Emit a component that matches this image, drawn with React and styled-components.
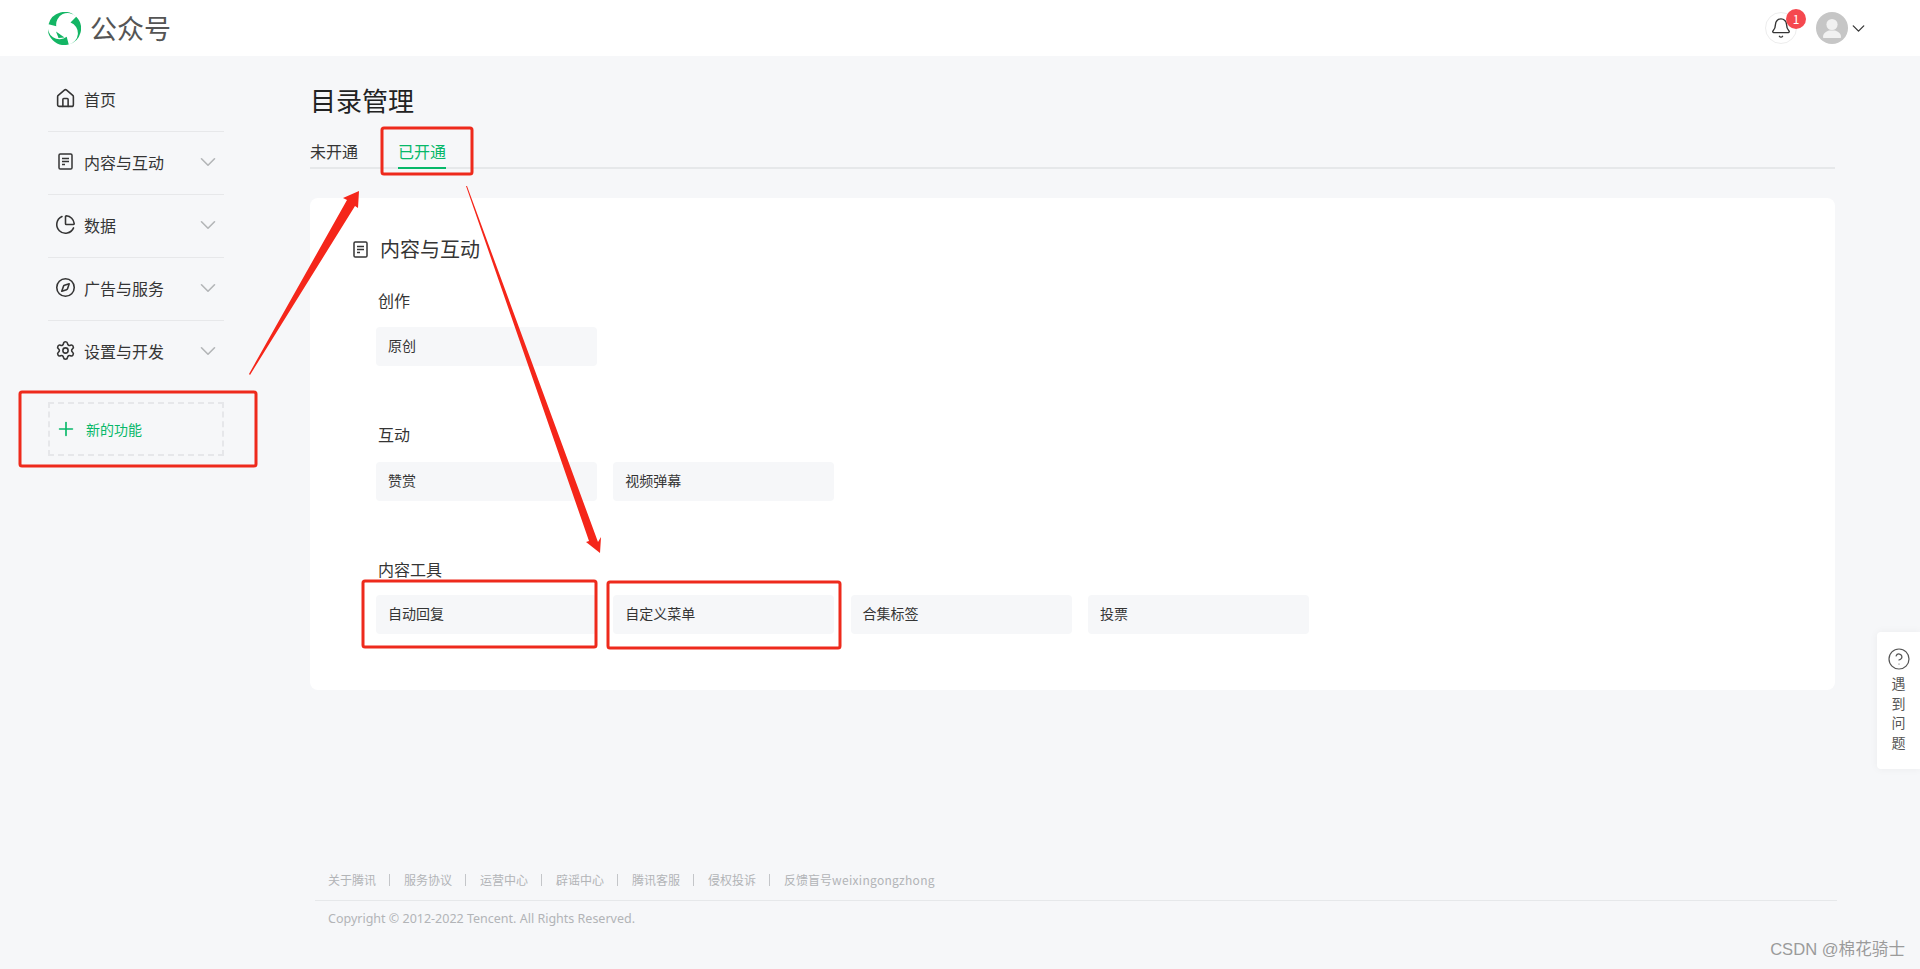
import React from 'react';
import styled, { createGlobalStyle } from 'styled-components';
import { House, ChartPie, Compass, Settings, ChevronDown, Plus, Bell, CircleHelp } from 'lucide-react';

const GlobalStyle = createGlobalStyle`
  html, body {
    margin: 0;
    padding: 0;
    background: #f6f7f9;
    color: #353535;
    font-family: "Noto Sans CJK SC", "Liberation Sans", sans-serif;
  }
  * { box-sizing: border-box; }
`;

const Page = styled.div`
  position: relative;
  width: 1920px;
  height: 969px;
  overflow: hidden;
`;

const Header = styled.header`
  height: 56px;
  background: #fff;
  padding: 0 51px 0 48px;
  display: flex;
  align-items: center;
  justify-content: space-between;
`;

const Brand = styled.div`
  display: flex;
  align-items: center;
  gap: 9px;
  font-size: 27px;
  line-height: 36px;
  color: #555;
`;

const UserArea = styled.div`
  display: flex;
  align-items: center;
`;

const BellButton = styled.div`
  position: relative;
  width: 32px;
  height: 32px;
  border: 1px solid #ededed;
  border-radius: 50%;
  display: flex;
  align-items: center;
  justify-content: center;
  color: #353535;
`;

const Badge = styled.span`
  position: absolute;
  top: -4px;
  right: -10px;
  width: 20px;
  height: 20px;
  border-radius: 50%;
  background: #f5484f;
  color: #fff;
  font-size: 12px;
  line-height: 20px;
  text-align: center;
`;

const Avatar = styled.div`
  width: 32px;
  height: 32px;
  margin-left: 19px;
`;

const Layout = styled.div`
  display: flex;
`;

const Sidebar = styled.nav`
  width: 176px;
  margin-left: 48px;
  padding-top: 13px;
  flex-shrink: 0;
`;

const NavItem = styled.div`
  height: 63px;
  display: flex;
  align-items: center;
  padding: 0 3px 3px 7px;
  font-size: 16px;
  color: #353535;
  border-bottom: 1px solid ${({ $last }) => ($last ? 'transparent' : '#e7e8ea')};

  svg.nav-icon {
    width: 21px;
    height: 21px;
    margin-right: 8px;
    color: #353535;
    flex-shrink: 0;
  }
`;

const NavLabel = styled.span`
  flex: 1;
`;

const NavArrow = styled(ChevronDown)`
  width: 26px;
  height: 26px;
  color: #b4b6b8;
`;

const NewFeature = styled.div`
  height: 54px;
  margin-top: 18px;
  border: 2px dashed #e6e7ea;
  display: flex;
  align-items: center;
  padding-left: 5px;
  gap: 9px;
  font-size: 14px;
  color: #07b869;
`;

const Main = styled.main`
  width: 1525px;
  margin-left: 86px;
  padding-top: 26px;
`;

const Title = styled.h1`
  margin: 0;
  font-size: 26px;
  line-height: 36px;
  font-weight: 400;
  color: #222;
`;

const Tabs = styled.div`
  margin-top: 14px;
  display: flex;
  gap: 40px;
  box-shadow: inset 0 -2px 0 #e6e8ea;
`;

const Tab = styled.div`
  height: 37px;
  padding-top: 7px;
  font-size: 16px;
  line-height: 24px;
  color: ${({ $active }) => ($active ? '#07b869' : '#353535')};
  border-bottom: 2px solid ${({ $active }) => ($active ? '#07b869' : 'transparent')};
`;

const Card = styled.section`
  margin-top: 29px;
  height: 492px;
  background: #fff;
  border-radius: 8px;
  padding: 36px 40px;
`;

const CardTitle = styled.div`
  display: flex;
  align-items: center;
  gap: 9px;
  height: 30px;
  font-size: 20px;
  line-height: 28px;
  color: #353535;
`;

const Group = styled.div`
  margin-top: ${({ $top }) => $top}px;
  padding-left: 26px;
`;

const GroupLabel = styled.div`
  padding-left: 2px;
  height: 24px;
  font-size: 16px;
  line-height: 22px;
  color: #353535;
  margin-bottom: ${({ $gap }) => $gap}px;
`;

const ChipRow = styled.div`
  display: flex;
  gap: 16.3px;
`;

const Chip = styled.div`
  width: 221px;
  height: 39px;
  background: #f6f7f9;
  border-radius: 4px;
  padding-left: 12px;
  font-size: 14px;
  line-height: 37px;
  color: #353535;
`;

const Footer = styled.footer`
  margin-top: 179px;
  font-size: 12px;
  color: #b2b4b7;
`;

const FooterLinks = styled.div`
  display: flex;
  padding-left: 18px;
  height: 22px;
  line-height: 22px;
`;

const FooterLink = styled.span`
  & + &::before {
    content: '';
    display: inline-block;
    width: 1px;
    height: 12px;
    margin: 0 14px 0 13px;
    background: #c4c6c9;
    vertical-align: -1px;
  }
`;

const LatinPart = styled.span`
  letter-spacing: 0.3px;
`;

const Copyright = styled.div`
  margin: 9px -2px 0 5px;
  padding: 8px 0 0 13px;
  border-top: 1px solid #e6e8ea;
  line-height: 20px;
  font-size: 12.5px;
  font-family: "Noto Sans", "Noto Sans CJK SC", sans-serif;
`;

const HelpTab = styled.div`
  position: absolute;
  right: 0;
  top: 632px;
  width: 43px;
  height: 137px;
  background: #fff;
  border-radius: 4px 0 0 4px;
  box-shadow: 0 0 8px rgba(0, 0, 0, 0.05);
  display: flex;
  flex-direction: column;
  align-items: center;
  padding-top: 15px;
  font-size: 14px;
  line-height: 19.5px;
  color: #555;
  gap: 3px;
`;

const HelpText = styled.div`
  width: 14px;
  text-align: center;
`;

const Watermark = styled.div`
  position: absolute;
  right: 15px;
  bottom: 7px;
  font-size: 16.6px;
  line-height: 24px;
  color: #9b9b9b;
  font-family: "Liberation Sans", "Noto Sans CJK SC", sans-serif;
`;

const Annotations = styled.svg`
  position: absolute;
  left: 0;
  top: 0;
  pointer-events: none;
`;

const DocIcon = ({ className }) => (
  <svg className={className} width="21" height="21" viewBox="0 0 21 21" fill="none" stroke="currentColor" strokeWidth="1.5">
    <rect x="4" y="3" width="13" height="15" rx="1.3" />
    <path d="M7 7.500h7M7 10.500h7M7 13.500h3" />
  </svg>
);

// one arc of the swirl, turned three times around the centre
const swirl = 'M.56 12.2A16.5 16.5 0 0 1 28.2 4.8A11.5 11.5 0 0 0 8.3 14.3z';

const Logo = () => (
  <svg width="33" height="33" viewBox="0 0 33 33">
    <g fill="#13b564">
      <path d={swirl} />
      <path d={swirl} transform="rotate(120 16.5 16.5)" />
      <path d={swirl} transform="rotate(240 16.5 16.5)" />
      <path d="M8 19.500l2.500 6.500 6-.5z" />
    </g>
  </svg>
);

const AvatarIcon = () => (
  <svg width="32" height="32" viewBox="0 0 32 32">
    <circle cx="16" cy="16" r="16" fill="#c6c6c6" />
    <circle cx="16" cy="12.500" r="5.600" fill="#f1f1f1" />
    <path d="M7 25c0-4 4-6 6-6.500h6c2 .5 6 2.500 6 6.500 0 .6-.4 1-1 1H8c-.6 0-1-.4-1-1z" fill="#f1f1f1" />
  </svg>
);

const nav = [
  { label: '首页', Icon: House },
  { label: '内容与互动', Icon: DocIcon, more: true },
  { label: '数据', Icon: ChartPie, more: true },
  { label: '广告与服务', Icon: Compass, more: true },
  { label: '设置与开发', Icon: Settings, more: true },
];

const groups = [
  { label: '创作', top: 25, gap: 14, chips: ['原创'] },
  { label: '互动', top: 57, gap: 15, chips: ['赞赏', '视频弹幕'] },
  { label: '内容工具', top: 57, gap: 13, chips: ['自动回复', '自定义菜单', '合集标签', '投票'] },
];

const footerLinks = ['关于腾讯', '服务协议', '运营中心', '辟谣中心', '腾讯客服', '侵权投诉'];

const redBoxes = [
  [20, 392, 236, 74],
  [382, 128, 90, 46],
  [363, 581, 233, 66],
  [608, 582, 232, 66],
];

const App = () => (
  <Page>
    <GlobalStyle />
    <Header>
      <Brand>
        <Logo />
        公众号
      </Brand>
      <UserArea>
        <BellButton>
          <Bell size={22} strokeWidth={1.5} />
          <Badge>1</Badge>
        </BellButton>
        <Avatar>
          <AvatarIcon />
        </Avatar>
        <ChevronDown size={21} strokeWidth={1.5} color="#353535" />
      </UserArea>
    </Header>
    <Layout>
      <Sidebar>
        {nav.map(({ label, Icon, more }, i) => (
          <NavItem key={label} $last={i === nav.length - 1}>
            <Icon className="nav-icon" strokeWidth={1.8} />
            <NavLabel>{label}</NavLabel>
            {more && <NavArrow strokeWidth={1.5} />}
          </NavItem>
        ))}
        <NewFeature>
          <Plus size={22} strokeWidth={1.8} />
          新的功能
        </NewFeature>
      </Sidebar>
      <Main>
        <Title>目录管理</Title>
        <Tabs>
          <Tab>未开通</Tab>
          <Tab $active>已开通</Tab>
        </Tabs>
        <Card>
          <CardTitle>
            <DocIcon />
            内容与互动
          </CardTitle>
          {groups.map((group) => (
            <Group key={group.label} $top={group.top}>
              <GroupLabel $gap={group.gap}>{group.label}</GroupLabel>
              <ChipRow>
                {group.chips.map((chip) => (
                  <Chip key={chip}>{chip}</Chip>
                ))}
              </ChipRow>
            </Group>
          ))}
        </Card>
        <Footer>
          <FooterLinks>
            {footerLinks.map((link) => (
              <FooterLink key={link}>{link}</FooterLink>
            ))}
            <FooterLink>
              反馈盲号<LatinPart>weixingongzhong</LatinPart>
            </FooterLink>
          </FooterLinks>
          <Copyright>Copyright © 2012-2022 Tencent. All Rights Reserved.</Copyright>
        </Footer>
      </Main>
    </Layout>
    <HelpTab>
      <CircleHelp size={24} strokeWidth={1.2} />
      <HelpText>遇到问题</HelpText>
    </HelpTab>
    <Watermark>CSDN @棉花骑士</Watermark>
    <Annotations width="1920" height="969" viewBox="0 0 1920 969">
      {redBoxes.map(([x, y, w, h]) => (
        <rect key={x} x={x} y={y} width={w} height={h} rx="2" fill="none" stroke="#ee2a1c" strokeWidth="3" />
      ))}
      <polygon points="249,374 347,200 343,198 359,191 358,208 355,206 250,375" fill="#f5261a" />
      <polygon points="466,186 467,186 598,542 601,537 600,553 586,542 589,541" fill="#f5261a" />
    </Annotations>
  </Page>
);

export default App;
